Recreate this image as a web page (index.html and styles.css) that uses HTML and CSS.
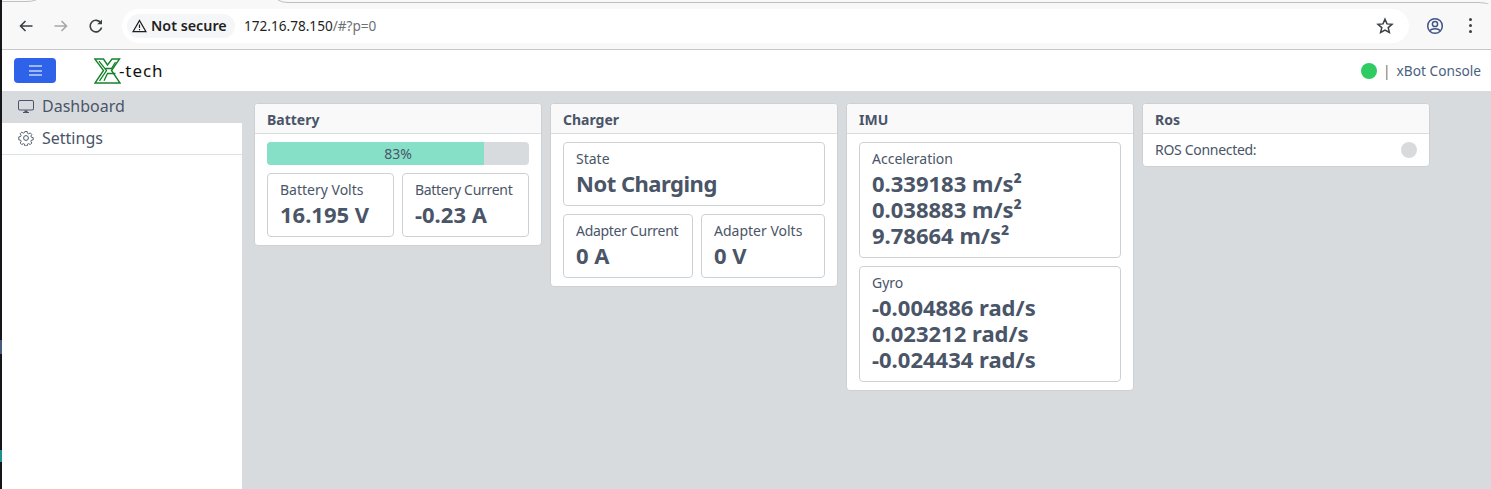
FILE: index.html
```html
<!DOCTYPE html>
<html lang="en">
<head>
<meta charset="utf-8">
<title>xBot Console</title>
<link rel="stylesheet" href="styles.css">
</head>
<body>
<div class="desk-edge"><i class="edge-mark edge-blue"></i><i class="edge-mark edge-teal"></i></div>
<div class="window">
  <header class="chrome">
    <svg class="tab-edges" width="1489" height="4" viewBox="0 0 1489 4"><path d="M0 1.5H24Q30 1.5 34 0M276 0Q280 2.5 286 2.5H1476Q1484 2.5 1489 5" fill="none" stroke="#bdbfc2"/></svg>
    <button class="nav-btn"><svg width="16" height="16" viewBox="0 0 16 16"><path d="M14.5 8H2.5M7.5 3L2.5 8l5 5" fill="none" stroke="#3c4043" stroke-width="1.6"/></svg></button>
    <button class="nav-btn"><svg width="16" height="16" viewBox="0 0 16 16"><path d="M1.5 8H13.5M8.5 3l5 5-5 5" fill="none" stroke="#a6a8ab" stroke-width="1.6"/></svg></button>
    <button class="nav-btn"><svg width="16" height="16" viewBox="0 0 16 16"><path d="M13 5.2A5.8 5.8 0 1 0 13.6 9.5" fill="none" stroke="#3c4043" stroke-width="1.6"/><path d="M14 1.5V6.3H9.2z" fill="#3c4043"/></svg></button>
    <div class="omnibox">
      <span class="chip"><svg width="15" height="14" viewBox="0 0 15 14"><path d="M7.5 1.5L14 12.7H1z" fill="none" stroke="#1f1f1f" stroke-width="1.3"/><path d="M7.5 5.5v3.6M7.5 10v1.3" stroke="#1f1f1f" stroke-width="1.2"/></svg><b>Not secure</b></span>
      <span class="url">172.16.78.150<span class="url-rest">/#?p=0</span></span>
      <svg class="star" width="18" height="18" viewBox="0 0 18 18"><path d="M9 2.2l2 4.7 5 .4-3.8 3.3 1.2 4.9L9 13l-4.4 2.5 1.2-4.9L2 7.3l5-.4z" fill="none" stroke="#3c4043" stroke-width="1.5"/></svg>
    </div>
    <svg class="profile" width="18" height="18" viewBox="0 0 18 18"><circle cx="9" cy="9" r="7.3" fill="none" stroke="#3f5488" stroke-width="1.5"/><circle cx="9" cy="7" r="2.6" fill="none" stroke="#3f5488" stroke-width="1.5"/><path d="M3.8 13.6C6 11 12 11 14.2 13.6" fill="none" stroke="#3f5488" stroke-width="1.5"/></svg>
    <span class="dots"><i></i><i></i><i></i></span>
  </header>
  <nav class="topbar">
    <button class="menu-btn"><span></span><span></span><span></span></button>
    <div class="logo">
      <svg width="27" height="26" viewBox="0 0 27 26"><path d="M.8 1H9.5L13.5 7 18 1H25.5L17.5 12.5 26 25H1L9.5 12.5z" fill="none" stroke="#14822a" stroke-width="1.4"/><path d="M5 3.2L12.5 12.5 5.5 22.8M10 22.8L13.5 15.5H21.5M11.5 10.5H17.5L21.5 4" fill="none" stroke="#14822a" stroke-width="1.3"/></svg>
      <span class="logo-text">-tech</span>
    </div>
    <div class="status">
      <i class="status-dot"></i>
      <span class="status-sep">|</span>
      <span>xBot Console</span>
    </div>
  </nav>
  <div class="body">
    <aside class="sidebar">
      <a class="side-item active">
        <svg width="16" height="16" viewBox="0 0 16 16" fill="#4a5568"><path d="M0 4a2 2 0 0 1 2-2h12a2 2 0 0 1 2 2v6.5a2 2 0 0 1-2 2H2a2 2 0 0 1-2-2zm2-1a1 1 0 0 0-1 1v6.5a1 1 0 0 0 1 1h12a1 1 0 0 0 1-1V4a1 1 0 0 0-1-1z"/><path d="M5 15h6v-1H5zM6.5 12.5h3V14h-3z"/></svg>
        Dashboard
      </a>
      <a class="side-item">
        <svg width="16" height="16" viewBox="0 0 16 16" fill="none" stroke="#4a5568"><circle cx="8" cy="8" r="2.4"/><path d="M6.8 1h2.4l.4 1.9 1.3.6 1.7-1 1.7 1.7-1 1.7.5 1.3 2 .4v2.4l-2 .4-.5 1.3 1 1.7-1.7 1.7-1.7-1-1.3.5-.4 2H6.8l-.4-2-1.3-.5-1.7 1-1.7-1.7 1-1.7-.5-1.3-2-.4V6.8l2-.4.5-1.3-1-1.7 1.7-1.7 1.7 1 1.3-.6z" transform="translate(.6 .6) scale(.925)"/></svg>
        Settings
      </a>
    </aside>
    <main class="board">
      <section class="card">
        <h2 class="card-head">Battery</h2>
        <div class="card-body">
          <div class="progress"><div class="progress-fill" style="width:83%"></div><span class="progress-label">83%</span></div>
          <div class="row">
            <div class="stat stat-a"><div class="stat-label">Battery Volts</div><div class="stat-value">16.195 V</div></div>
            <div class="stat stat-b"><div class="stat-label">Battery Current</div><div class="stat-value">-0.23 A</div></div>
          </div>
        </div>
      </section>
      <section class="card">
        <h2 class="card-head">Charger</h2>
        <div class="card-body">
          <div class="stat"><div class="stat-label">State</div><div class="stat-value stat-value-tight">Not Charging</div></div>
          <div class="row">
            <div class="stat stat-c"><div class="stat-label">Adapter Current</div><div class="stat-value">0 A</div></div>
            <div class="stat stat-d"><div class="stat-label">Adapter Volts</div><div class="stat-value">0 V</div></div>
          </div>
        </div>
      </section>
      <section class="card">
        <h2 class="card-head">IMU</h2>
        <div class="card-body">
          <div class="stat"><div class="stat-label">Acceleration</div><div class="stat-value">0.339183 m/s²<br>0.038883 m/s²<br>9.78664 m/s²</div></div>
          <div class="stat"><div class="stat-label">Gyro</div><div class="stat-value">-0.004886 rad/s<br>0.023212 rad/s<br>-0.024434 rad/s</div></div>
        </div>
      </section>
      <section class="card">
        <h2 class="card-head">Ros</h2>
        <div class="ros-row"><span class="ros-label">ROS Connected:</span><i class="ros-dot"></i></div>
      </section>
    </main>
  </div>
</div>
</body>
</html>
```

FILE: styles.css
```css
* { box-sizing: border-box; }
html, body { height: 100%; }
body {
  margin: 0;
  display: flex;
  height: 489px;
  overflow: hidden;
  background: #d8dbde;
  font-family: "Noto Sans", "Open Sans", sans-serif;
  color: #4a5568;
}
.desk-edge {
  width: 2px;
  flex: none;
  background: #14161a;
  position: relative;
}
.edge-mark { position: absolute; left: 0; width: 2px; }
.edge-blue { top: 340px; height: 14px; background: #4a5a80; }
.edge-teal { top: 450px; height: 12px; background: #1f8f8f; }
.window { flex: 1; display: flex; flex-direction: column; min-width: 0; }

.chrome {
  position: relative;
  height: 50px;
  flex: none;
  display: flex;
  align-items: center;
  padding: 2px 0 0 6px;
  background: #f8f8f9;
  border-bottom: 1px solid #c6c7c9;
}
.tab-edges { position: absolute; left: 0; top: 0; }
.nav-btn {
  width: 35px;
  height: 32px;
  padding: 0;
  border: 0;
  background: none;
  display: flex;
  align-items: center;
  justify-content: center;
}
.omnibox {
  margin-left: 9px;
  width: 1287px;
  height: 34px;
  border-radius: 17px;
  background: #fff;
  display: flex;
  align-items: center;
  padding: 0 15px 0 5px;
}
.chip {
  display: flex;
  align-items: center;
  gap: 4px;
  height: 24px;
  padding: 0 8px 0 5px;
  width: 108px;
  flex: none;
  border-radius: 12px;
  background: #f5f6f7;
  color: #1f1f1f;
  font-size: 14.3px;
  white-space: nowrap;
}
.chip b { font-weight: 600; }
.url { margin-left: 9px; font-size: 13.6px; color: #1f1f1f; }
.url-rest { color: #6d7175; }
.star { margin-left: auto; }
.profile { margin-left: 17px; flex: none; }
.dots { margin-left: 25px; display: flex; flex-direction: column; gap: 3px; }
.dots i { width: 3px; height: 3px; border-radius: 50%; background: #3c4043; }

.topbar {
  height: 41px;
  flex: none;
  display: flex;
  align-items: center;
  padding: 0 10px 0 12px;
  background: #fff;
}
.menu-btn {
  width: 42px;
  height: 25px;
  padding: 0;
  border: 0;
  border-radius: 4px;
  background: #2e62e8;
  display: flex;
  flex-direction: column;
  align-items: center;
  justify-content: center;
  gap: 2.5px;
}
.menu-btn span { width: 13px; height: 2px; background: #9db7f3; }
.logo { margin-left: 38px; display: flex; align-items: center; }
.logo svg { flex: none; }
.logo-text { margin-left: -2px; font-size: 17px; color: #111; letter-spacing: .9px; }
.status { margin-left: auto; display: flex; align-items: center; font-size: 13.7px; color: #4a5f80; }
.status-dot { width: 16px; height: 16px; border-radius: 50%; background: #2ecc63; }
.status-sep { margin: 0 6px; color: #7d7468; }

.body { flex: 1; display: flex; min-height: 0; }
.sidebar { width: 240px; flex: none; background: #fff; }
.side-item {
  display: flex;
  align-items: center;
  gap: 8px;
  height: 32px;
  padding: 0 16px 1px;
  font-size: 16px;
  color: #4a5568;
  border-bottom: 1px solid #dee2e6;
}
.side-item.active { height: 32px; padding-bottom: 2px; background: #d8dbde; border-bottom: 0; }
.board {
  flex: 1;
  display: flex;
  align-items: flex-start;
  gap: 8px;
  padding: 12px;
  background: #d8dbde;
}
.card {
  width: 288px;
  flex: none;
  background: #fff;
  border: 1px solid #ced1d4;
  border-radius: 4px;
  overflow: hidden;
}
.card-head {
  margin: 0;
  height: 30px;
  padding: 1px 12px 0;
  display: flex;
  align-items: center;
  font-size: 14px;
  font-weight: 700;
  color: #4a5568;
  background: #f9f9f9;
  border-bottom: 1px solid #d9dbdd;
}
.card-body { padding: 8px 12px; display: flex; flex-direction: column; gap: 8px; }
.progress {
  position: relative;
  height: 23px;
  border-radius: 4px;
  background: #d8dbde;
  overflow: hidden;
  display: flex;
  align-items: center;
  justify-content: center;
  font-size: 14px;
}
.progress-fill { position: absolute; left: 0; top: 0; bottom: 0; background: #86e0c8; }
.progress-label { position: relative; }
.row { display: flex; gap: 8px; }
.stat {
  flex: 1 1 0;
  min-width: 0;
  padding: 8px 12px 9px;
  border: 1px solid #ced1d4;
  border-radius: 4px;
  background: #fff;
}
.stat-a { flex: 0 0 127px; }
.stat-c { flex: 0 0 130px; }
.stat-b .stat-label, .stat-c .stat-label, .ros-label { letter-spacing: -.3px; }
.stat-label { font-size: 14px; line-height: 16px; margin-bottom: 3px; white-space: nowrap; }
.stat-value { font-size: 22px; font-weight: 700; line-height: 26px; white-space: nowrap; }
.stat-value-tight { letter-spacing: -.5px; }
.ros-row {
  height: 32px;
  padding: 0 12px 1px;
  display: flex;
  align-items: center;
  justify-content: space-between;
  font-size: 14px;
}
.ros-dot { width: 16px; height: 16px; border-radius: 50%; background: #d8dbde; }
```
